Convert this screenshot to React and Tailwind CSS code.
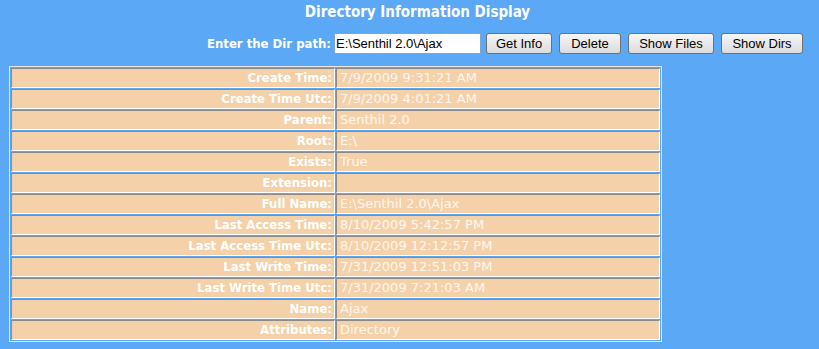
import { useState } from "react";

const rows = [
  ["Create Time:", "7/9/2009 9:31:21 AM"],
  ["Create Time Utc:", "7/9/2009 4:01:21 AM"],
  ["Parent:", "Senthil 2.0"],
  ["Root:", "E:\\"],
  ["Exists:", "True"],
  ["Extension:", ""],
  ["Full Name:", "E:\\Senthil 2.0\\Ajax"],
  ["Last Access Time:", "8/10/2009 5:42:57 PM"],
  ["Last Access Time Utc:", "8/10/2009 12:12:57 PM"],
  ["Last Write Time:", "7/31/2009 12:51:03 PM"],
  ["Last Write Time Utc:", "7/31/2009 7:21:03 AM"],
  ["Name:", "Ajax"],
  ["Attributes:", "Directory"],
];

const tahoma = { fontFamily: '"DejaVu Sans Condensed", "DejaVu Sans", sans-serif' };
const arial = { fontFamily: '"Liberation Sans", Arial, sans-serif' };

function Btn({ children, w }) {
  return (
    <button
      className={`h-[21px] ${w} rounded-[3px] border border-[#707070] bg-gradient-to-b from-[#f6f6f6] to-[#dcdcdc] text-[13px] leading-none text-black`}
      style={arial}
    >
      {children}
    </button>
  );
}

export default function App() {
  const [path, setPath] = useState("E:\\Senthil 2.0\\Ajax");

  return (
    <div className="h-[349px] w-[819px] overflow-hidden bg-[#5aa8f6] text-white" style={tahoma}>
      <h1 className="pl-[16px] pt-[3px] text-center text-[15px] font-bold leading-[18px]">
        Directory Information Display
      </h1>

      <div className="mt-[12px] flex items-center justify-end pr-[16px]">
        <span className="mr-[3px] text-[13px] font-bold">Enter the Dir path:</span>
        <input
          value={path}
          onChange={(e) => setPath(e.target.value)}
          className="h-[21px] w-[147px] border border-[#7aa7d8] bg-white px-[1px] text-[13px] text-black outline-none"
          style={arial}
        />
        <div className="ml-[5px] flex gap-[7px]">
          <Btn w="w-[66px]">Get Info</Btn>
          <Btn w="w-[62px]">Delete</Btn>
          <Btn w="w-[86px]">Show Files</Btn>
          <Btn w="w-[82px]">Show Dirs</Btn>
        </div>
      </div>

      <table className="ml-[9px] mt-[12px] w-[653px] border-separate border-spacing-[1px] border border-[#e6e6e6] text-[13px] leading-[16px]">
        <tbody>
          {rows.map(([label, value]) => (
            <tr key={label}>
              <td className="h-[20px] w-1/2 border border-b-white border-l-[#8a8a8a] border-r-white border-t-[#8a8a8a] bg-[#f5d1a9] px-[2px] text-right font-bold">
                {label}
              </td>
              <td
                className="h-[20px] w-1/2 border border-b-white border-l-[#8a8a8a] border-r-white border-t-[#8a8a8a] bg-[#f5d1a9] px-[3px] text-left text-[#fdf6ee]"
                style={{ fontFamily: '"DejaVu Sans", sans-serif' }}
              >
                {value}
              </td>
            </tr>
          ))}
        </tbody>
      </table>
    </div>
  );
}
